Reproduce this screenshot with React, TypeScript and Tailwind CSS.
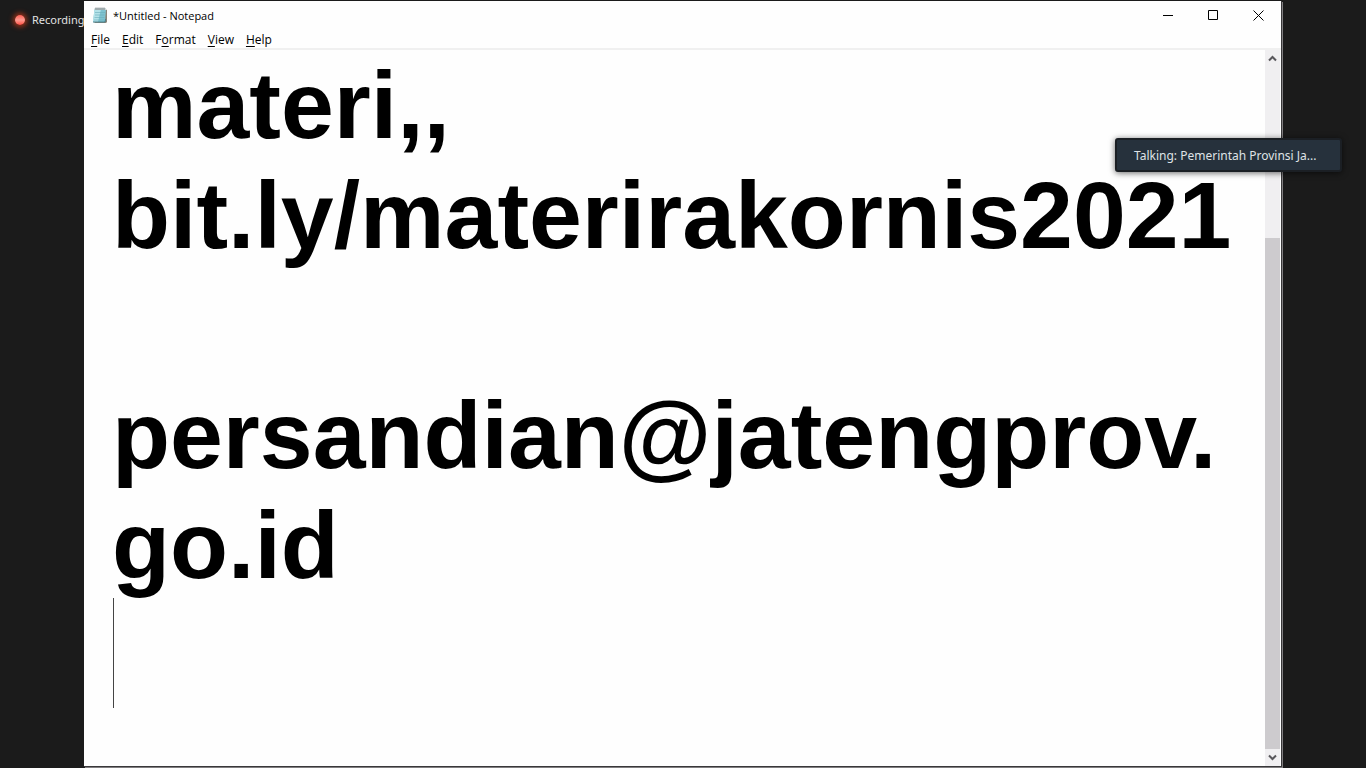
import React from "react";

const menuItems = [
  { before: "", key: "F", after: "ile" },
  { before: "", key: "E", after: "dit" },
  { before: "F", key: "o", after: "rmat" },
  { before: "", key: "V", after: "iew" },
  { before: "", key: "H", after: "elp" },
];

const note = "materi,,\nbit.ly/materirakornis2021\n\npersandian@jatengprov.\ngo.id\n";

function NotepadIcon() {
  return (
    <svg width="16" height="17" viewBox="0 0 16 17" aria-hidden="true">
      <path d="M13 2l2 1v12l-1 1H3l-1-1z" fill="#8a8478" />
      <path d="M2.500 2H14l-1 13H1z" fill="#7fc3d0" />
      <path d="M2.500 2H9L6 15H1z" fill="#b4e2e8" />
      <path d="M3 5.500h10M3 8h9.500M2.500 10.500h10M2 13h10" stroke="#69adba" strokeWidth=".6" />
      <path d="M2.500 2H14" stroke="#cfdadb" strokeWidth="2" />
      <path d="M4 .5v2.500M6 .5v2.500M8 .5v2.500M10 .5v2.500M12 .5v2.500" stroke="#59666a" strokeWidth=".8" />
      <path d="M1 15h12l.5-3" fill="none" stroke="#457f8c" />
    </svg>
  );
}

function RecordingBadge() {
  return (
    <div className="flex w-[84px] shrink-0 items-start overflow-hidden pt-3 pl-3">
      <div className="flex shrink-0 items-center gap-1">
        <span className="flex size-4 items-center justify-center">
          <span className="size-[10px] rounded-full bg-linear-to-b from-[#ff5c50] via-[#ff9a90] to-[#ff4840] shadow-[0_0_5px_2px_#9c3218]" />
        </span>
        <span className="text-[11px] leading-4 text-[#e2e2e2]">Recording</span>
      </div>
    </div>
  );
}

function TitleBar() {
  const control = "flex w-[45px] items-center justify-center";
  return (
    <header className="flex h-[29px] items-stretch justify-between pl-2">
      <div className="flex items-center gap-[5px]">
        <NotepadIcon />
        <h1 className="pt-px font-['Open_Sans',sans-serif] text-[11px] leading-4">*Untitled - Notepad</h1>
      </div>
      <div className="flex">
        <button aria-label="Minimize" className={control}>
          <svg width="11" height="11" viewBox="0 0 11 11"><path d="M0 5.500h10" stroke="#000" /></svg>
        </button>
        <button aria-label="Maximize" className={control}>
          <svg width="11" height="11" viewBox="0 0 11 11"><path d="M.5.5h9v9h-9z" fill="none" stroke="#000" /></svg>
        </button>
        <button aria-label="Close" className={control}>
          <svg width="11" height="11" viewBox="0 0 11 11"><path d="M.5.5l10 10M10.500.5l-10 10" stroke="#000" /></svg>
        </button>
      </div>
    </header>
  );
}

function ScrollBar() {
  return (
    <div className="mr-px flex w-[15px] shrink-0 flex-col bg-[#f0eff1]">
      <button aria-label="Scroll up" className="flex h-[17px] items-center justify-center">
        <svg width="9" height="7" viewBox="0 0 9 7"><path d="M1 5.500l3.500-3.500L8 5.500" fill="none" stroke="#58575b" strokeWidth="2" /></svg>
      </button>
      <div className="flex flex-1 flex-col">
        <div className="flex-[171]" />
        <div className="flex-[511] bg-[#cdcbce]" />
      </div>
      <button aria-label="Scroll down" className="flex h-[17px] items-center justify-center">
        <svg width="9" height="7" viewBox="0 0 9 7"><path d="M1 1.500l3.500 3.500L8 1.500" fill="none" stroke="#58575b" strokeWidth="2" /></svg>
      </button>
    </div>
  );
}

export default function App() {
  return (
    <div className="relative flex h-screen overflow-hidden bg-[#1b1b1b] font-['Noto_Sans',sans-serif]">
      <RecordingBadge />
      <main className="my-px flex min-w-0 flex-1 flex-col border-r border-b border-[#39383a] bg-[#fefefe] text-black shadow-[1px_1px_0_#807e80]">
        <TitleBar />
        <nav className="flex h-5 items-center gap-3 border-b-2 border-[#f0f0f0] pt-0.5 pl-[7px] font-['Open_Sans',sans-serif] text-[12px] leading-4">
          {menuItems.map((item) => (
            <button key={item.key}>
              {item.before}
              <span className="underline underline-offset-2">{item.key}</span>
              {item.after}
            </button>
          ))}
        </nav>
        <div className="flex min-h-0 flex-1">
          <div className="relative flex min-w-0 flex-1">
            <textarea
              aria-label="Document text"
              spellCheck={false}
              defaultValue={note}
              className="block min-w-0 flex-1 resize-none overflow-hidden whitespace-pre bg-transparent pl-7 font-['Liberation_Sans',Arial,sans-serif] text-[95px] leading-[110px] font-bold outline-none"
            />
            <span className="absolute top-[548px] left-[29px] h-[110px] w-px bg-[#444]" />
          </div>
          <ScrollBar />
        </div>
      </main>
      <div className="w-[84px] shrink-0" />
      <div className="absolute top-[138px] right-6 flex h-[34px] w-[227px] items-center rounded-[3px] border-2 border-[#1b1f24] bg-[#26313c] pt-px pl-[17px] text-[12px] text-[#dfe3e6] shadow-[0_1px_6px_rgba(0,0,0,0.6)]">
        Talking: Pemerintah Provinsi Ja...
      </div>
    </div>
  );
}
